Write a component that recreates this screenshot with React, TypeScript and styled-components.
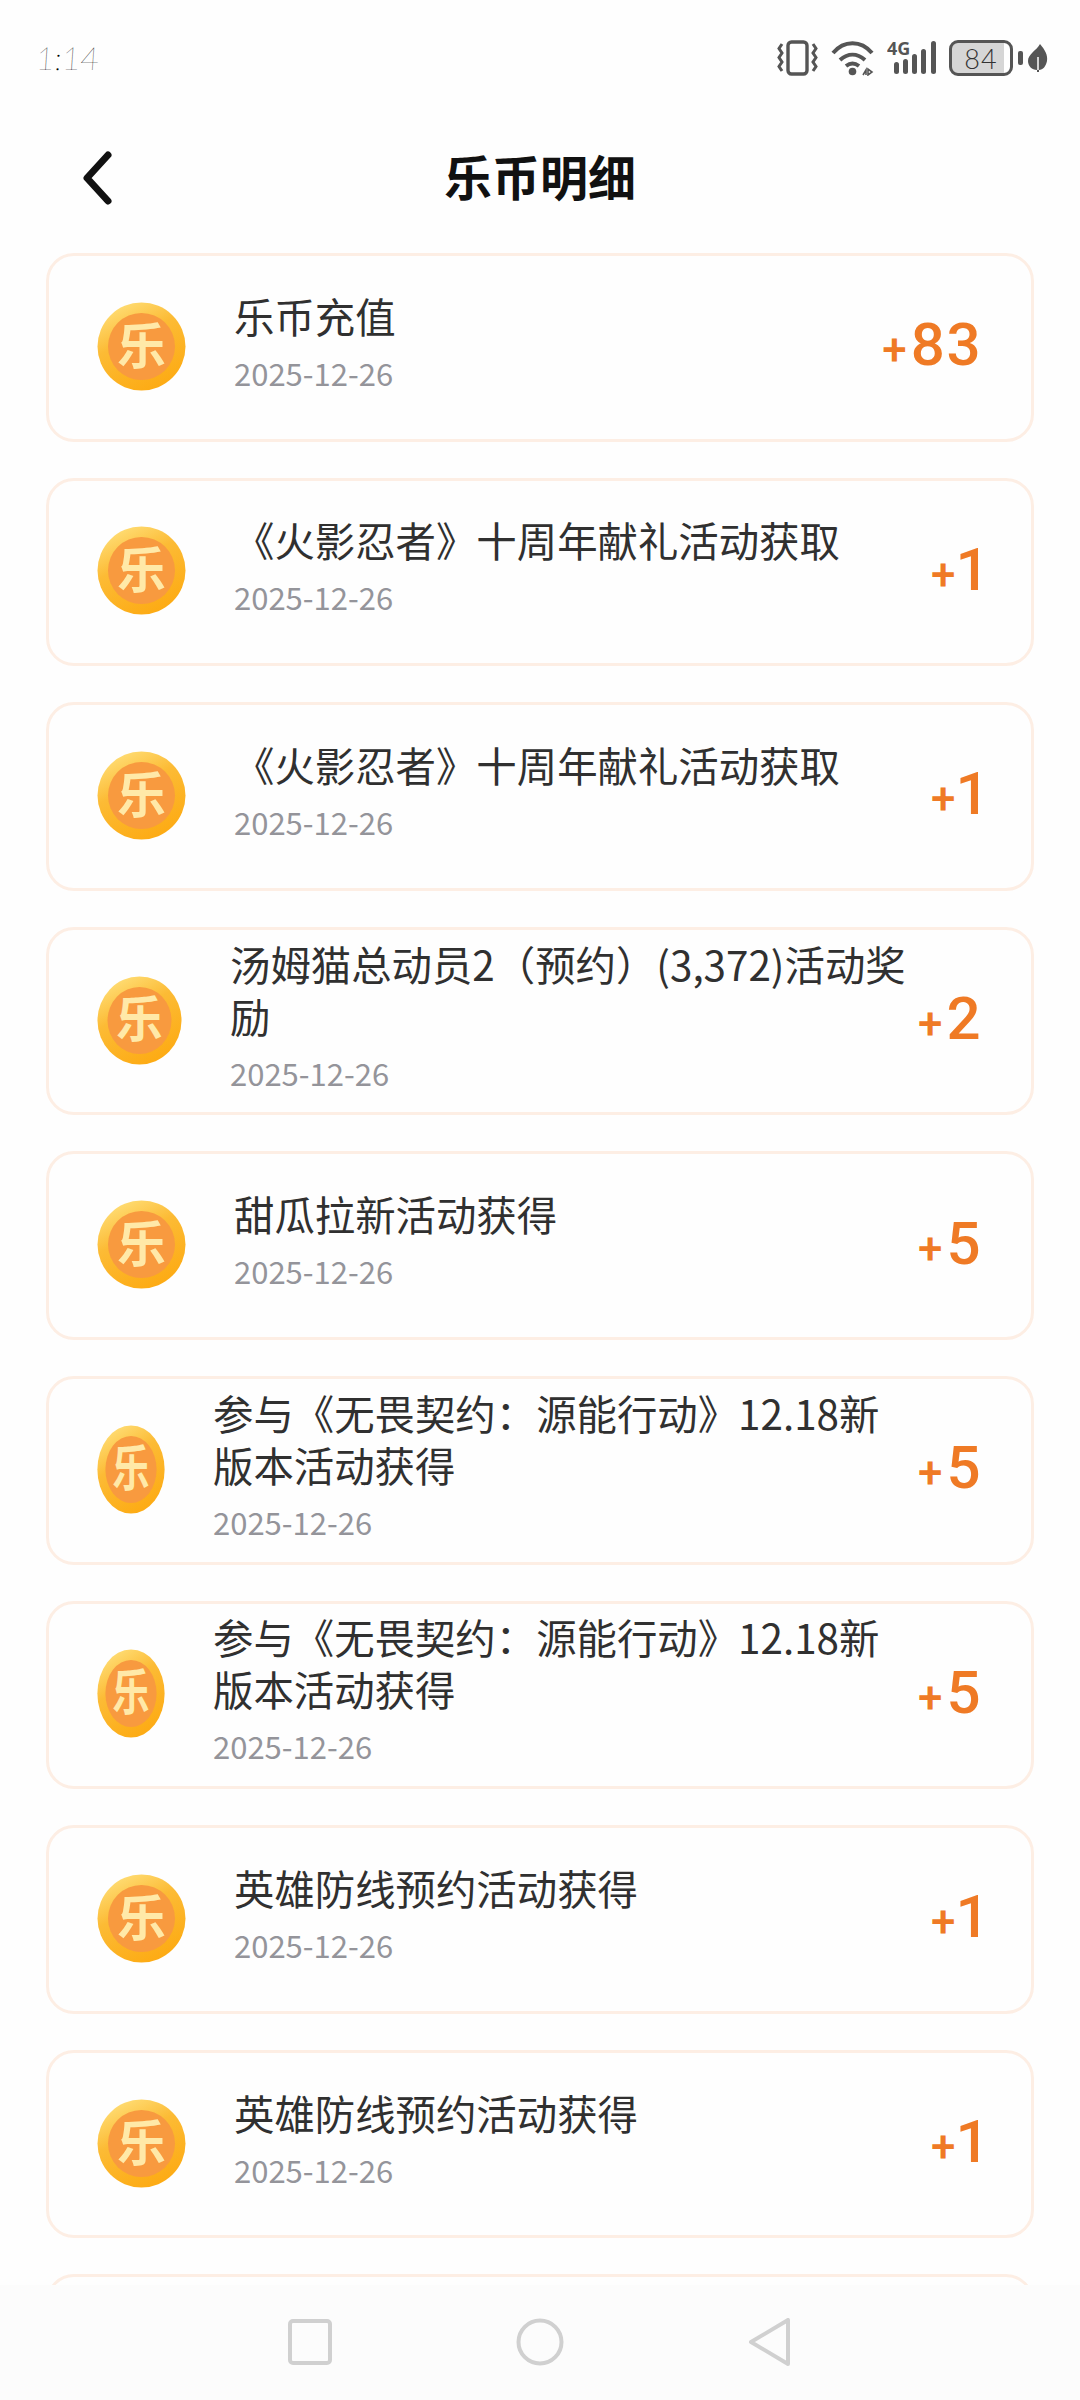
import React from "react";
import styled, { createGlobalStyle } from "styled-components";

const GlobalStyle = createGlobalStyle`
  html, body { margin: 0; padding: 0; background: #fefefe; }
  * { box-sizing: border-box; }
`;

const Screen = styled.div`
  width: 1080px;
  height: 2400px;
  display: flex;
  flex-direction: column;
  overflow: hidden;
  background: #fefefe;
  font-family: "Noto Sans CJK SC", "Noto Sans", sans-serif;
`;

const StatusBar = styled.div`
  height: 110px;
  flex: none;
  display: flex;
  align-items: flex-start;
  justify-content: space-between;
  padding: 40px 32px 0 36px;
`;

const Clock = styled.span`
  font-family: Lato, "Liberation Sans", sans-serif;
  font-weight: 100;
  font-size: 32px;
  line-height: 36px;
  color: #000;
  transform: skewX(-4deg);
`;

const StatusIcons = styled.div`
  display: flex;
  align-items: center;
  height: 36px;
  gap: 13px;
`;

const BatteryGroup = styled.div`
  display: flex;
  align-items: center;
  gap: 5px;
`;

const BatteryShell = styled.div`
  width: 64px;
  height: 36px;
  border: 3px solid #555;
  border-radius: 9px;
  overflow: hidden;
  display: flex;
  align-items: center;
  justify-content: center;
  background: linear-gradient(90deg, #d6d6d6 90%, #fff 90%);
  font-family: Lato, "Liberation Sans", sans-serif;
  font-weight: 300;
  font-size: 27px;
  letter-spacing: 1px;
  color: #333;
`;

const Header = styled.header`
  height: 136px;
  flex: none;
  display: flex;
  align-items: center;
  justify-content: center;
  position: relative;
`;

const BackIcon = styled.svg`
  position: absolute;
  left: 80px;
  top: 40px;
`;

const Title = styled.h1`
  margin: 0 0 6px;
  font-size: 48px;
  font-weight: 700;
  color: #111;
  line-height: 60px;
`;

const List = styled.div`
  flex: 1;
  min-height: 0;
  overflow: hidden;
  display: flex;
  flex-direction: column;
  gap: 36px;
  padding: 7px 46px 0;
`;

const Card = styled.div`
  flex: none;
  height: 188.6px;
  display: flex;
  align-items: center;
  padding: 0 49px 0 48px;
  background: #fefefe;
  border: 3px solid #fdeee4;
  border-radius: 28px;
`;

const CoinIcon = styled.svg<{ $width: number }>`
  flex: none;
  width: ${(p) => p.$width}px;
  height: 89px;
  margin: 0 48px 2px 0;
`;

const TextColumn = styled.div`
  flex: 1;
  min-width: 0;
  padding-bottom: 14px;
  display: flex;
  flex-direction: column;
  gap: 13px;
`;

const ItemName = styled.div`
  font-size: 40.4px;
  line-height: 52px;
  color: #303030;
  font-weight: 400;
`;

const ItemDate = styled.div`
  font-size: 31px;
  line-height: 36px;
  color: #94949a;
`;

const Amount = styled.div`
  flex: none;
  display: flex;
  align-items: baseline;
  margin-left: 4px;
  padding-bottom: 4px;
  font-family: Roboto, "Noto Sans", sans-serif;
  font-weight: 500;
  color: #ef7a25;
`;

const Plus = styled.span<{ $gap: number }>`
  font-size: 44px;
  margin-right: ${(p) => p.$gap}px;
`;

const Digits = styled.span<{ $trim: number }>`
  font-size: 60px;
  line-height: 64px;
  letter-spacing: 1.5px;
  margin-right: ${(p) => -p.$trim}px;
`;

const NavBar = styled.nav`
  height: 115px;
  flex: none;
  display: flex;
  align-items: flex-start;
  justify-content: center;
  padding-top: 33px;
  gap: 184px;
  background: #fcfcfc;
`;

const Coin = ({ width = 89 }: { width?: number }) => (
  <CoinIcon $width={width} viewBox="0 0 89 89" preserveAspectRatio="none">
    <defs>
      <linearGradient id="coinRim" x1="0.2" y1="0" x2="0.7" y2="1">
        <stop offset="0" stopColor="#ffe07a" />
        <stop offset="0.4" stopColor="#fcbb35" />
        <stop offset="1" stopColor="#fdaa12" />
      </linearGradient>
    </defs>
    <circle cx="44.5" cy="44.5" r="44" fill="url(#coinRim)" />
    <circle cx="44.5" cy="44.5" r="33.5" fill="#f89a3f" />
    <text
      x="44.5"
      y="61.5"
      textAnchor="middle"
      fontSize="49"
      fontWeight="700"
      fontFamily="'Noto Sans CJK SC', sans-serif"
      fill="#ffe9a8"
    >
      乐
    </text>
  </CoinIcon>
);

type Entry = { name: string; amount: number; coin?: number };

const entries: Entry[] = [
  { name: "乐币充值", amount: 83 },
  { name: "《火影忍者》十周年献礼活动获取", amount: 1 },
  { name: "《火影忍者》十周年献礼活动获取", amount: 1 },
  { name: "汤姆猫总动员2（预约）(3,372)活动奖励", amount: 2, coin: 85 },
  { name: "甜瓜拉新活动获得", amount: 5 },
  { name: "参与《无畏契约：源能行动》12.18新版本活动获得", amount: 5, coin: 68 },
  { name: "参与《无畏契约：源能行动》12.18新版本活动获得", amount: 5, coin: 68 },
  { name: "英雄防线预约活动获得", amount: 1 },
  { name: "英雄防线预约活动获得", amount: 1 },
];

export default function App() {
  return (
    <Screen>
      <GlobalStyle />
      <StatusBar>
        <Clock>1:14</Clock>
        <StatusIcons>
          {/* vibrate mode */}
          <svg width="41" height="36" viewBox="0 0 41 36" fill="none" stroke="#555">
            <rect x="11" y="2" width="19" height="32" rx="3.5" strokeWidth="3.4" />
            <path d="M5 4L2 8.500l3 4.500-3 4.500 3 4.500-3 4.500 3 4.500M36 4l3 4.500-3 4.500 3 4.500-3 4.500 3 4.500-3 4.500" strokeWidth="3" />
          </svg>
          {/* wifi */}
          <svg width="43" height="36" viewBox="0 0 43 36" fill="none" stroke="#555" strokeWidth="4">
            <path d="M2 13C13 0 30 0 41 13" />
            <path d="M9 20c8-7 17-7 25 0" />
            <path d="M15 26c4-3 9-3 13 0" />
            <circle cx="21.500" cy="31.500" r="3.800" fill="#555" stroke="none" />
            <path d="M32 35l3-5v5M37 29v6l4-3z" strokeWidth="1.600" />
          </svg>
          {/* mobile signal, drawn taller than the row so the 4G label has headroom */}
          <svg width="49" height="48" viewBox="0 -6 49 48" fill="#555">
            <text x="0" y="15" fontSize="18" fontWeight="700" fontFamily="'Noto Sans', sans-serif">4G</text>
            <rect x="7" y="22" width="5" height="12" rx="2.500" />
            <rect x="16" y="19" width="5" height="15" rx="2.500" />
            <rect x="25" y="14" width="5" height="20" rx="2.500" />
            <rect x="34" y="9" width="5" height="25" rx="2.500" />
            <rect x="44" y="1" width="5" height="33" rx="2.500" />
          </svg>
          <BatteryGroup>
            <BatteryShell>84</BatteryShell>
            <svg width="5" height="14" viewBox="0 0 5 14">
              <rect width="5" height="14" rx="2" fill="#555" />
            </svg>
            {/* power-saving leaf */}
            <svg width="20" height="28" viewBox="0 0 20 28">
              <path d="M12 0C17 6 20 11 19 17c-1 5-4 9-8 9v2H9v-2C4 26 0 22 0 17 0 10 8 7 12 0z" fill="#555" />
              <path d="M10 26V13" stroke="#fefefe" strokeWidth="1.500" />
            </svg>
          </BatteryGroup>
        </StatusIcons>
      </StatusBar>

      <Header>
        <BackIcon width="34" height="56" viewBox="0 0 34 56" fill="none" stroke="#111" strokeWidth="7" strokeLinecap="round" strokeLinejoin="round">
          <path d="M28 5L7 28l21 23" />
        </BackIcon>
        <Title>乐币明细</Title>
      </Header>

      <List>
        {entries.map((entry, i) => (
          <Card key={i}>
            <Coin width={entry.coin} />
            <TextColumn>
              <ItemName>{entry.name}</ItemName>
              <ItemDate>2025-12-26</ItemDate>
            </TextColumn>
            <Amount>
              <Plus $gap={entry.amount === 1 ? 0 : 4}>+</Plus>
              <Digits $trim={entry.amount === 1 ? 9 : 0}>{entry.amount}</Digits>
            </Amount>
          </Card>
        ))}
        {/* next row, scrolled mostly under the navigation bar */}
        <Card />
      </List>

      <NavBar>
        <svg width="44" height="48" viewBox="0 0 44 48" fill="none" stroke="#d0d0d0" strokeWidth="4">
          <rect x="2" y="3" width="40" height="42" rx="3" />
        </svg>
        <svg width="48" height="48" viewBox="0 0 48 48" fill="none" stroke="#d0d0d0" strokeWidth="4">
          <circle cx="24" cy="24" r="21.500" />
        </svg>
        <svg width="44" height="48" viewBox="0 0 44 48" fill="none" stroke="#d0d0d0" strokeWidth="4" strokeLinejoin="round">
          <path d="M40 2v44L3 24z" />
        </svg>
      </NavBar>
    </Screen>
  );
}
